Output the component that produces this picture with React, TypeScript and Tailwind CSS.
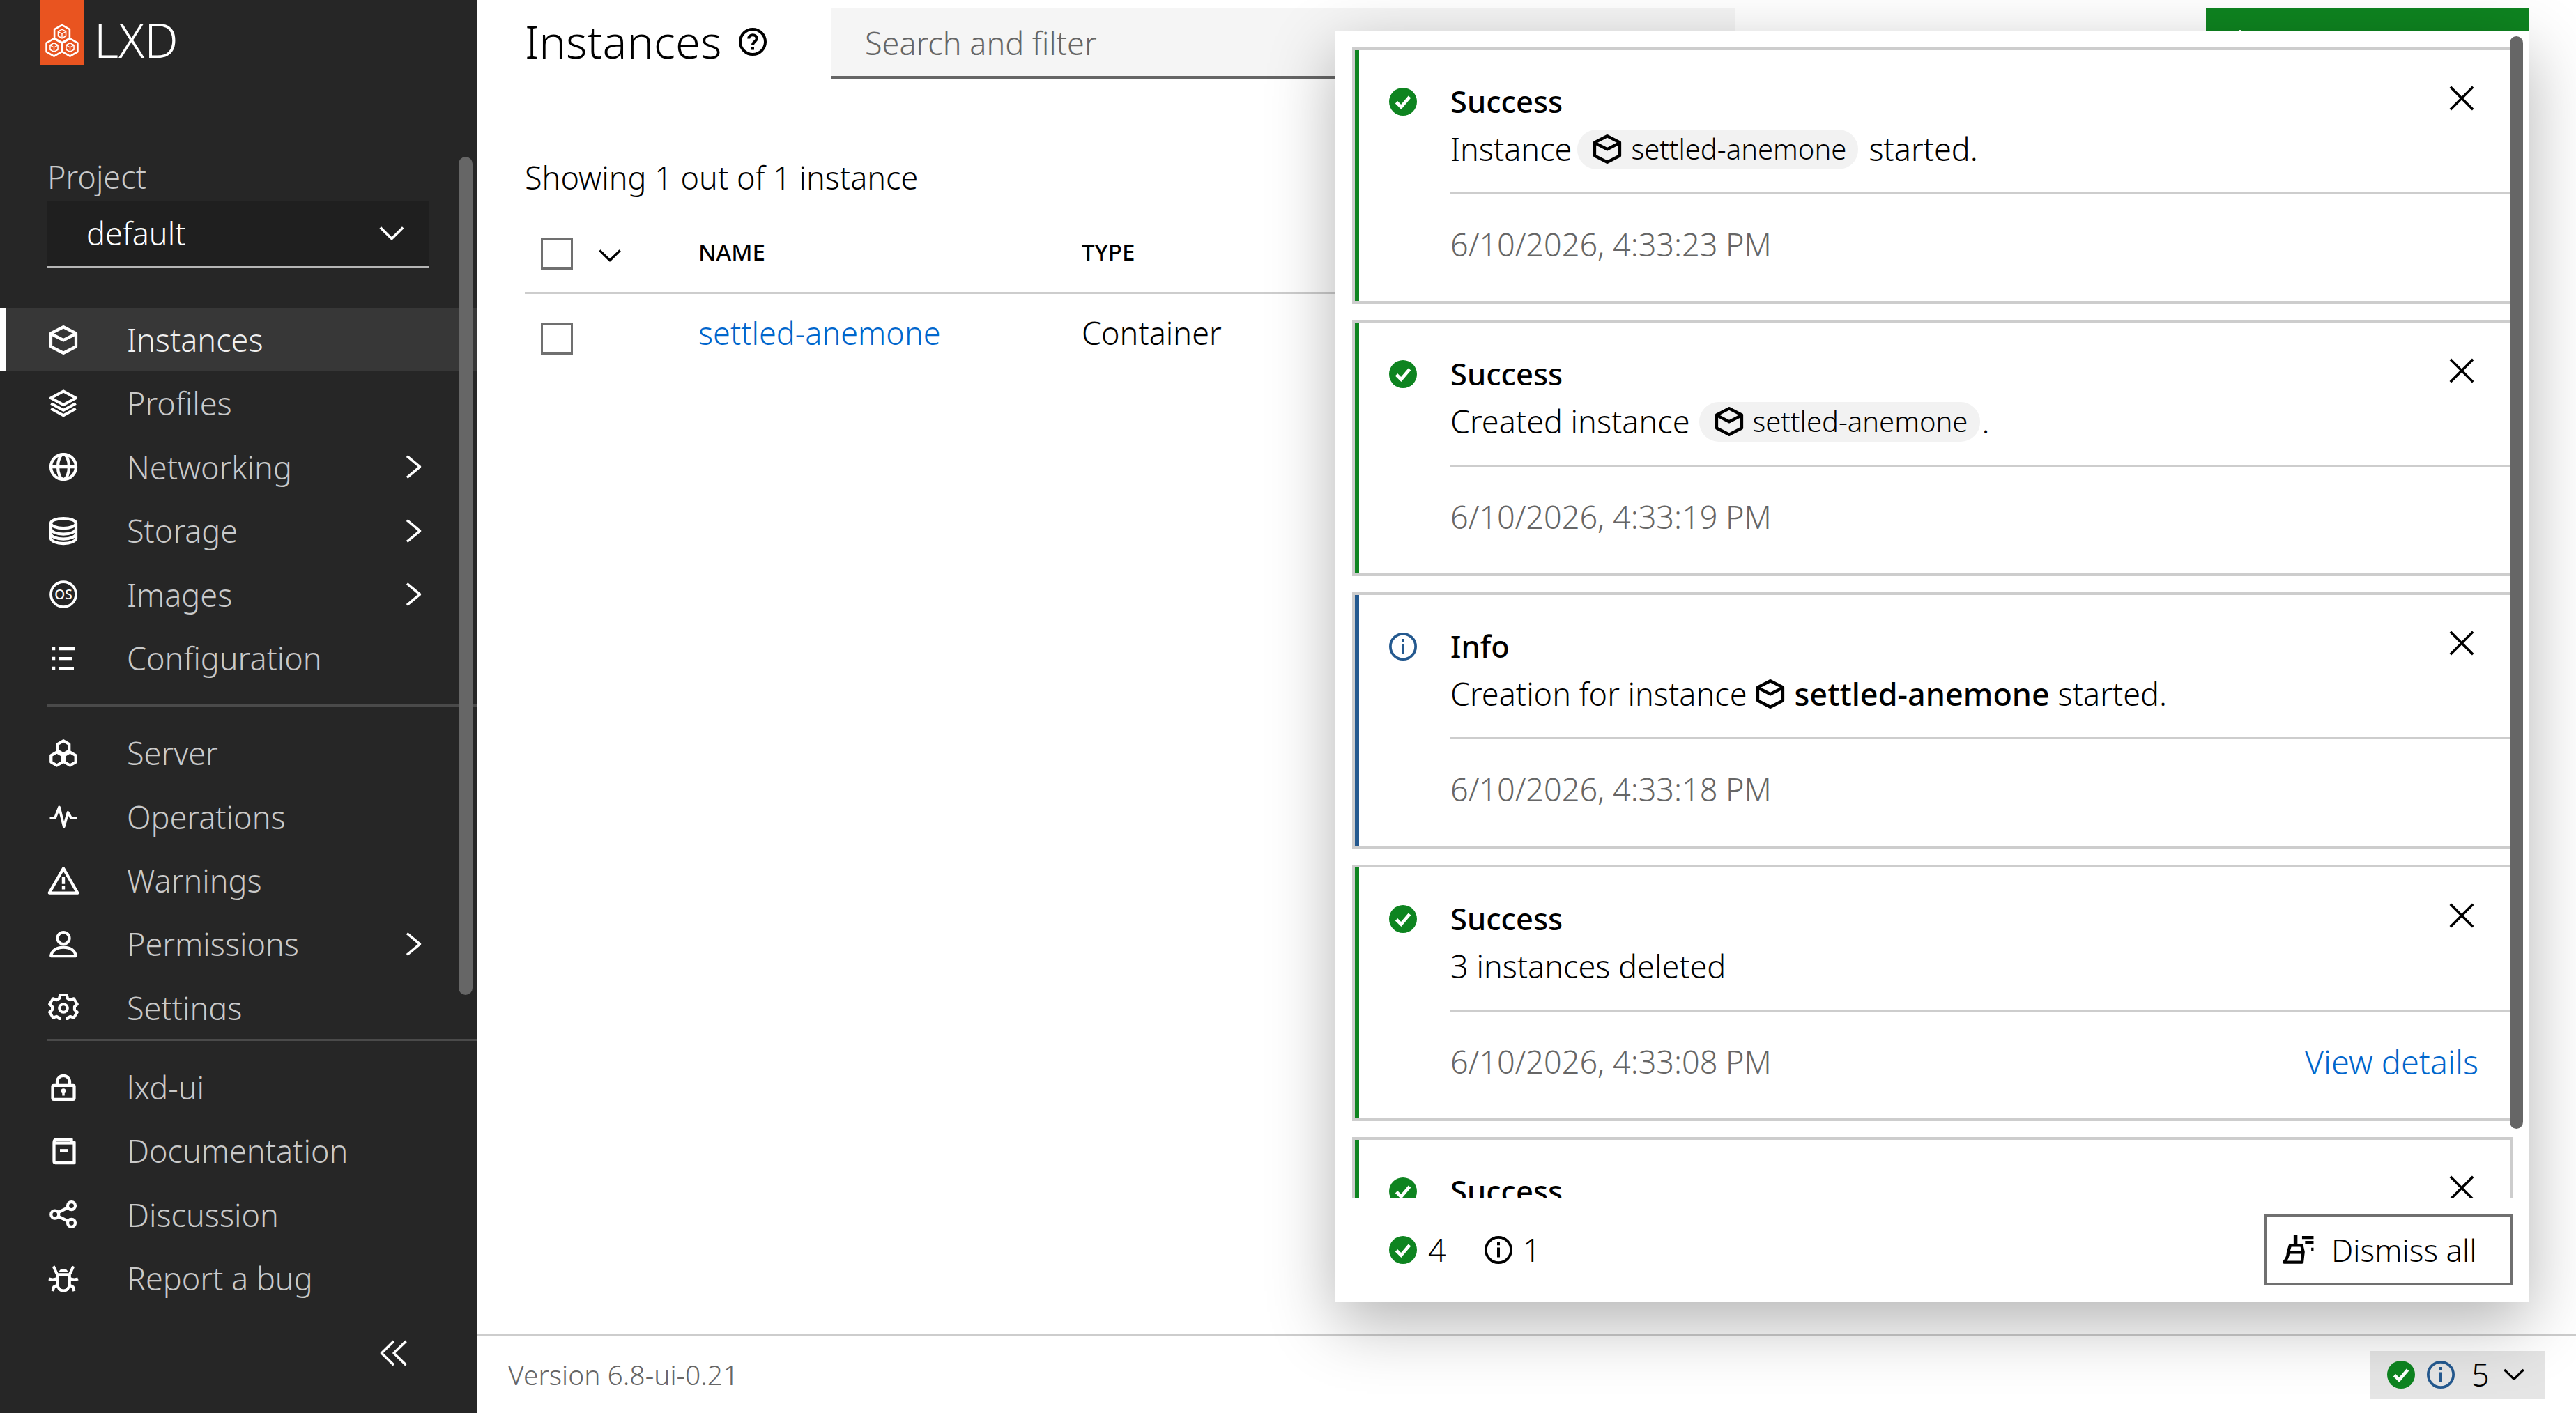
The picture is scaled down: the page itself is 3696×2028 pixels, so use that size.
import React from "react";

const hex = (cx: number, cy: number, r: number) => {
  const d = 0.866 * r;
  return `${cx},${cy - r} ${cx + d},${cy - r / 2} ${cx + d},${cy + r / 2} ${cx},${cy + r} ${cx - d},${cy + r / 2} ${cx - d},${cy - r / 2}`;
};

const Svg = ({ className = "w-[40px] h-[40px]", sw = 1.7, children }: { className?: string; sw?: number; children: React.ReactNode }) => (
  <svg viewBox="0 0 16 16" className={`${className} shrink-0 overflow-visible`} fill="none" stroke="currentColor" strokeWidth={sw} strokeLinejoin="round">
    {children}
  </svg>
);

const Cube = ({ className }: { className?: string }) => (
  <Svg className={className}>
    <path d="M8 .5 15.2 4.2V11.8L8 15.5 .8 11.8V4.2Z" />
    <path d="M.8 4.4 8 8.1 15.2 4.4" />
  </Svg>
);
const Layers = () => (
  <Svg>
    <path d="M8 1 15.2 4.9 8 8.8 .8 4.9Z" />
    <path d="M.9 8 8 11.9 15.1 8" />
    <path d="M.9 11 8 14.9 15.1 11" />
  </Svg>
);
const Globe = () => (
  <Svg>
    <circle cx="8" cy="8" r="7.2" />
    <ellipse cx="8" cy="8" rx="3.2" ry="7.2" />
    <path d="M.8 8H15.2" />
  </Svg>
);
const Database = () => (
  <Svg>
    <ellipse cx="8" cy="3.6" rx="7.2" ry="2.8" />
    <path d="M.8 3.6V12.2C.8 13.9 4 15.2 8 15.2S15.2 13.9 15.2 12.2V3.6" />
    <path d="M.8 6.8C.8 8.5 4 9.8 8 9.8S15.2 8.5 15.2 6.8" />
    <path d="M.8 9.6C.8 11.3 4 12.6 8 12.6S15.2 11.3 15.2 9.6" />
  </Svg>
);
const OsIcon = () => (
  <Svg sw={1.5}>
    <circle cx="8" cy="8" r="7.2" />
    <text x="8" y="10.7" textAnchor="middle" fontSize="7.6" fontWeight="500" fill="currentColor" stroke="none" fontFamily="Noto Sans, sans-serif">OS</text>
  </Svg>
);
const ListIcon = () => (
  <Svg>
    <path d="M5.6 2.4H14.8M5.6 8H12.9M5.6 13.6H14" />
    <path d="M1.2 1.5h2.1v1.8H1.2zM1.2 7.1h2.1v1.8H1.2zM1.2 12.7h2.1v1.8H1.2z" fill="currentColor" stroke="none" />
  </Svg>
);
const Cluster = () => (
  <Svg>
    <polygon points={hex(8, 4.7, 3.8)} />
    <polygon points={hex(4.2, 11.2, 3.8)} />
    <polygon points={hex(11.8, 11.2, 3.8)} />
  </Svg>
);
const Pulse = () => (
  <Svg sw={1.5}>
    <path d="M.2 8.8H3.2L5.6 2.6 8.3 13.8 10.6 5.6 12.4 8.8H15.8" />
  </Svg>
);
const Warning = () => (
  <Svg className="h-[44px] w-[44px]" sw={1.5}>
    <path d="M8 1.6 15.4 14.4H.6Z" />
    <path d="M7.2 6h1.6v3.7H7.2zM7.2 10.8h1.6v1.7H7.2z" fill="currentColor" stroke="none" />
  </Svg>
);
const User = () => (
  <Svg>
    <circle cx="8" cy="4.6" r="3.4" />
    <path d="M.9 14.8C1.3 11.6 4.3 9.8 8 9.8S14.7 11.6 15.1 14.8Z" />
  </Svg>
);
const Gear = () => (
  <Svg className="h-[44px] w-[44px]" sw={1.5}>
    <circle cx="8" cy="8" r="2.1" />
    <path d="M6.3 1.1H9.7L10.2 3 11.6 3.7 13.4 3 15.2 5.9 13.8 7.2V8.8L15.2 10.1 13.4 13 11.6 12.3 10.2 13 9.7 14.9H6.3L5.8 13 4.4 12.3 2.6 13 .8 10.1 2.2 8.8V7.2L.8 5.9 2.6 3 4.4 3.7 5.8 3Z" />
  </Svg>
);
const Lock = () => (
  <Svg>
    <rect x="1.8" y="6.7" width="12.4" height="8" rx=".6" />
    <path d="M4.4 6.7V4.7A3.6 3.6 0 0 1 11.6 4.7V6.7" />
    <circle cx="8" cy="9.9" r="1.4" fill="currentColor" stroke="none" />
    <path d="M7.3 10.4h1.4v2.2H7.3z" fill="currentColor" stroke="none" />
  </Svg>
);
const Book = () => (
  <Svg>
    <path d="M2.6 3.1C2.6 1.8 3.2 1.2 4.2 1.2H12.6V2.9H14.2V14.8H3.4C2.9 14.8 2.6 14.5 2.6 14Z" />
    <path d="M2.8 3.4H14" />
    <path d="M6 7.7H10.6" />
  </Svg>
);
const Share = () => (
  <Svg>
    <circle cx="3.1" cy="8" r="2.2" />
    <circle cx="12.6" cy="3" r="2.2" />
    <circle cx="12.6" cy="12.9" r="2.2" />
    <path d="M5 6.9 10.7 4M5 9.1 10.7 11.9" />
  </Svg>
);
const Bug = () => (
  <Svg className="h-[44px] w-[44px]" sw={1.5}>
    <path d="M4.8 5.9H11.2V10.7C11.2 12.7 9.8 14.4 8 14.4S4.8 12.7 4.8 10.7Z" />
    <path d="M5.6 4.5A2.6 2.6 0 0 1 10.4 4.5Z" fill="currentColor" stroke="none" />
    <path d="M2.8 1.6 4.6 5.6M13.2 1.6 11.4 5.6M.4 8.2C2 8.8 3.4 8.6 4.8 8M15.6 8.2C14 8.8 12.6 8.6 11.2 8M2.4 14.6 3 12.4 5 11.4M13.6 14.6 13 12.4 11 11.4" />
  </Svg>
);
const ChevronDown = ({ className = "w-[40px] h-[40px]" }: { className?: string }) => (
  <Svg className={className} sw={1.5}>
    <path d="M1.5 4.6 8 11 14.5 4.6" />
  </Svg>
);
const ChevronRight = () => (
  <Svg className="w-[36px] h-[36px]" sw={1.6}>
    <path d="M4 1.2 12.2 8 4 14.8" />
  </Svg>
);
const Close = () => (
  <Svg className="w-[36px] h-[36px]" sw={1.6}>
    <path d="M.8.8 15.2 15.2M15.2.8.8 15.2" />
  </Svg>
);
const CheckCircle = () => (
  <svg viewBox="0 0 16 16" className="w-[40px] h-[40px] shrink-0">
    <circle cx="8" cy="8" r="8" fill="#0e8420" />
    <path d="M4.2 8.3 6.9 11 11.8 5.2" fill="none" stroke="#fff" strokeWidth="1.9" />
  </svg>
);
const InfoCircle = ({ className = "text-[#24598f]" }: { className?: string }) => (
  <svg viewBox="0 0 16 16" className={`w-[40px] h-[40px] shrink-0 ${className}`}>
    <circle cx="8" cy="8" r="7.25" fill="none" stroke="currentColor" strokeWidth="1.5" />
    <path d="M7.2 3.6h1.6v1.7H7.2zM7.2 6.6h1.6v5.6H7.2z" fill="currentColor" />
  </svg>
);
const Help = () => (
  <Svg sw={1.6}>
    <circle cx="8" cy="8" r="7.2" />
    <path d="M5.7 6.2C5.7 4.9 6.7 4.1 8 4.1S10.3 4.9 10.3 6.1C10.3 7.8 8 7.9 8 9.8" />
    <path d="M7.2 11h1.6v1.6H7.2z" fill="currentColor" stroke="none" />
  </Svg>
);
const Broom = () => (
  <Svg className="w-[44px] h-[44px]" sw={1.6}>
    <path d="M2.6 9 3.6 5.6H9.6L10.4 9 9.8 14.4H.4C1.8 13 2.5 11 2.6 9Z" />
    <path d="M2.6 9.2H10.2" />
    <path d="M6.4.2V5.6" strokeWidth="2" />
    <path d="M9.8 1.5H15.8M11.4 4.1H15.8M14.6 7.6H15.8" />
  </Svg>
);
const Logo = () => (
  <svg viewBox="0 0 64 94" className="w-[64px] h-[94px]" fill="none" stroke="#fff" strokeLinejoin="round">
    {[[32, 48.5], [20.5, 68], [43.5, 68]].map(([x, y]) => (
      <g key={`${x}-${y}`}>
        <polygon points={hex(x, y, 12.6)} strokeWidth="2.6" />
        <polygon points={hex(x, y, 6.4)} strokeWidth="1.6" />
        <path d={`M${x - 5.5} ${y - 3.2} ${x} ${y} ${x + 5.5} ${y - 3.2}M${x} ${y}V${y + 6.4}`} strokeWidth="1.4" />
      </g>
    ))}
  </svg>
);

const NavRow = ({ icon, label, active, more }: { icon: React.ReactNode; label: string; active?: boolean; more?: boolean }) => (
  <div className={`flex h-[91.4px] shrink-0 items-center ${active ? "bg-[#373737] border-l-[8px] border-white pl-[63px] text-[#f0f0f0]" : "pl-[71px] text-[#c9c9c9]"}`}>
    <span className="flex w-[40px] justify-center text-white">{icon}</span>
    <span className="ml-[71px] flex-1 text-[45px] font-light">{label}</span>
    {more && (
      <span className="mr-[73px] text-white">
        <ChevronRight />
      </span>
    )}
  </div>
);

const Chip = ({ className }: { className: string }) => (
  <span className={`${className} inline-flex h-[57px] w-[403px] items-center rounded-[28px] bg-[#f2f2f2] pl-[23px]`}>
    <Cube />
    <span className="ml-[14px] text-[40px] font-light">settled-anemone</span>
  </span>
);

const Card = ({ info, title, body, time, link }: { info?: boolean; title: string; body: React.ReactNode; time: string; link?: boolean }) => (
  <div className="h-[368px] shrink-0 border-[4px] border-[#cdcdcd]">
    <div className={`flex h-full border-l-[6px] ${info ? "border-[#24598f]" : "border-[#0e8420]"}`}>
      <div className="w-[131px] shrink-0 pl-[43px] pt-[54px]">
        {info ? <InfoCircle /> : <CheckCircle />}
      </div>
      <div className="flex min-w-0 flex-1 flex-col pt-[40px]">
        <div className="flex h-[68px] items-center justify-between pr-[51px]">
          <span className="text-[43.5px] font-medium">{title}</span>
          <span className="-mt-[10px]">
            <Close />
          </span>
        </div>
        <div className="flex h-[68px] items-center whitespace-pre text-[45px] font-light">{body}</div>
        <div className="mt-[28px] flex h-[147px] items-center justify-between border-t-[3px] border-[#cdcdcd] pr-[45px]">
          <span className="text-[45px] font-light text-[#666666]">{time}</span>
          {link && <span className="text-[47px] font-light text-[#0066cc]">View details</span>}
        </div>
      </div>
    </div>
  </div>
);

const Checkbox = () => <span className="block h-[46px] w-[46px] border-[3px] border-b-[5px] border-[#707070]" />;

export default function App() {
  return (
    <div className="relative flex h-[2028px] w-[3696px] overflow-hidden bg-white font-['Noto_Sans',sans-serif] text-black">
      <aside className="relative z-20 flex w-[684px] shrink-0 flex-col bg-[#262626]">
        <div className="flex h-[94px] shrink-0 pl-[57px]">
          <span className="block h-[94px] w-[64px] bg-[#e95420]">
            <Logo />
          </span>
          <span className="ml-[14px] mt-[-3px] text-[68px] font-light leading-[120px] text-white">LXD</span>
        </div>
        <div className="h-[194px] shrink-0 pl-[68px] pt-[130px] text-[45px] font-light leading-[60px] text-[#c9c9c9]">Project</div>
        <div className="ml-[68px] flex h-[97px] w-[548px] shrink-0 items-center justify-between border-b-[3px] border-[#b5b5b5] bg-[#1f1f1f] pl-[56px] pr-[34px] text-[45px] font-light text-white">
          default
          <ChevronDown />
        </div>
        <div className="h-[57px] shrink-0" />
        <div className="flex h-[1022px] shrink-0 flex-col overflow-hidden">
          <NavRow active icon={<Cube />} label="Instances" />
          <NavRow icon={<Layers />} label="Profiles" />
          <NavRow more icon={<Globe />} label="Networking" />
          <NavRow more icon={<Database />} label="Storage" />
          <NavRow more icon={<OsIcon />} label="Images" />
          <NavRow icon={<ListIcon />} label="Configuration" />
          <div className="ml-[68px] mt-[21px] mb-[21px] shrink-0 border-t-[3px] border-[#4a4a4a]" />
          <NavRow icon={<Cluster />} label="Server" />
          <NavRow icon={<Pulse />} label="Operations" />
          <NavRow icon={<Warning />} label="Warnings" />
          <NavRow more icon={<User />} label="Permissions" />
          <NavRow icon={<Gear />} label="Settings" />
        </div>
        <div className="ml-[68px] mt-[27px] mb-[21px] shrink-0 border-t-[3px] border-[#4a4a4a]" />
        <NavRow icon={<Lock />} label="lxd-ui" />
        <NavRow icon={<Book />} label="Documentation" />
        <NavRow icon={<Share />} label="Discussion" />
        <NavRow icon={<Bug />} label="Report a bug" />
        <div className="flex justify-end pr-[96px] pt-[42px] text-white">
          <Svg className="h-[38px] w-[46px]" sw={1.5}>
            <path d="M8 .8 .6 8 8 15.2M15.4 .8 8 8 15.4 15.2" />
          </Svg>
        </div>
        {/* sidebar scrollbar */}
        <span className="absolute left-[658px] top-[225px] h-[1203px] w-[20px] rounded-[10px] bg-[#666666]" />
      </aside>

      <main className="flex min-w-0 flex-1 flex-col">
        <div className="flex-1 pl-[69px] pr-[68px] pt-[11px]">
          <div className="flex h-[103px] items-center">
            <h1 className="-mt-[6px] w-[300px] text-[65px] font-light leading-none">Instances</h1>
            <span className="-mt-[6px] ml-[7px]">
              <Help />
            </span>
            <div className="ml-[93px] flex h-[103px] w-[1296px] items-center border-b-[5px] border-[#666666] bg-[#f5f5f5] pl-[48px] pt-[4px] text-[45px] font-light text-[#666666]">
              Search and filter
            </div>
            <div className="ml-auto flex h-[103px] w-[463px] items-center bg-[#0e8420] pl-[29px] text-[45px] text-white">
              <Svg className="h-[40px] w-[40px]" sw={1.5}>
                <path d="M8 0V16M0 8H16" />
              </Svg>
              <span className="ml-[20px]">Create instance</span>
            </div>
          </div>
          <div className="mt-[111px] text-[45px] font-light leading-[60px]">Showing 1 out of 1 instance</div>
          <div className="mt-[55px] grid h-[82px] grid-cols-[249px_550px_1fr] items-start border-b-[3px] border-[#cdcdcd]">
            <div className="flex pl-[23px] pt-[2px]">
              <Checkbox />
              <span className="ml-[35px] mt-[7px]">
                <ChevronDown className="h-[36px] w-[36px]" />
              </span>
            </div>
            <div className="text-[33px] font-medium leading-[44px]">NAME</div>
            <div className="text-[33px] font-medium leading-[44px]">TYPE</div>
          </div>
          <div className="grid grid-cols-[249px_550px_1fr] pt-[21px]">
            <div className="pl-[23px] pt-[21px]">
              <Checkbox />
            </div>
            <div className="text-[45px] font-light leading-[70px] text-[#0066cc]">settled-anemone</div>
            <div className="text-[45px] font-light leading-[70px]">Container</div>
          </div>
        </div>
        <footer className="flex h-[113px] shrink-0 items-center justify-between border-t-[3px] border-[#cdcdcd] pl-[45px] pr-[45px]">
          <span className="text-[39px] font-light text-[#666666]">Version 6.8-ui-0.21</span>
          <div className="flex h-[69px] w-[251px] items-center bg-[#e5e5e5] pl-[25px]">
            <CheckCircle />
            <span className="ml-[17px]">
              <InfoCircle />
            </span>
            <span className="ml-[24px] text-[45px] font-light">5</span>
            <span className="ml-[18px]">
              <ChevronDown className="h-[34px] w-[34px]" />
            </span>
          </div>
        </footer>
      </main>

      {/* notifications panel */}
      <section className="absolute left-[1916px] top-[45px] z-10 flex h-[1823px] w-[1712px] flex-col bg-white shadow-[0_30px_90px_rgba(0,0,0,0.3)]">
        <div className="flex h-[1675px] shrink-0 flex-col gap-[23px] overflow-hidden pl-[24px] pr-[23px] pt-[23px]">
          <Card title="Success" time="6/10/2026, 4:33:23 PM" body={<>Instance<Chip className="ml-[8px] mr-[15px]" />started.</>} />
          <Card title="Success" time="6/10/2026, 4:33:19 PM" body={<>Created instance<Chip className="ml-[13px] mr-[3px]" />.</>} />
          <Card
            info
            title="Info"
            time="6/10/2026, 4:33:18 PM"
            body={
              <>
                Creation for instance
                <span className="mx-[14px]">
                  <Cube />
                </span>
                <b className="font-medium">settled-anemone</b> started.
              </>
            }
          />
          <Card link title="Success" time="6/10/2026, 4:33:08 PM" body="3 instances deleted" />
          <Card title="Success" time="" body="" />
        </div>
        <div className="flex flex-1 items-center pl-[77px] pr-[23px]">
          <CheckCircle />
          <span className="ml-[16px] text-[45px] font-light">4</span>
          <span className="ml-[55px]">
            <InfoCircle className="text-black" />
          </span>
          <span className="ml-[15px] text-[45px] font-light">1</span>
          <button className="ml-auto flex h-[102px] w-[356px] items-center border-[4px] border-[#707070] pl-[23px] text-[44px] font-light">
            <Broom />
            <span className="ml-[25px]">Dismiss all</span>
          </button>
        </div>
        {/* panel scrollbar */}
        <span className="absolute left-[1685px] top-[7px] h-[1568px] w-[19px] rounded-[10px] bg-[#666666]" />
      </section>
    </div>
  );
}
